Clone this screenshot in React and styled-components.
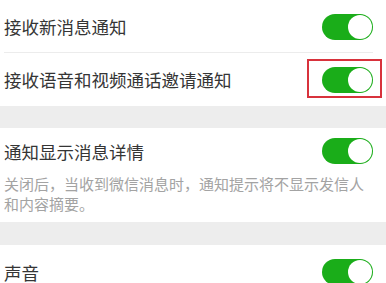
import React from "react";
import styled, { createGlobalStyle } from "styled-components";

const Global = createGlobalStyle`
  html, body {
    margin: 0;
    padding: 0;
    background: #ededed;
    font-family: "Noto Sans CJK SC", "Noto Sans", sans-serif;
  }
`;

const Page = styled.div`
  width: 386px;
  height: 283px;
  overflow: hidden;
  background: #ededed;
`;

const Group = styled.div`
  background: #fff;
  margin-bottom: ${(p) => p.gap || 0}px;
`;

const Row = styled.div`
  position: relative;
  display: flex;
  align-items: center;
  justify-content: space-between;
  height: ${(p) => p.h}px;
  padding: 0 13px 0 4px;
  box-sizing: border-box;
  &::after {
    content: "";
    display: ${(p) => (p.divider ? "block" : "none")};
    position: absolute;
    left: 4px;
    right: 13px;
    bottom: 0;
    height: 1px;
    background: #ececec;
  }
`;

const Title = styled.span`
  font-size: 17.5px;
  line-height: 1.2;
  color: #353535;
`;

const Desc = styled.div`
  padding: 0 13px 8px 4px;
  font-size: 15px;
  line-height: 20px;
  color: #a3a3a3;
`;

const SwitchWrap = styled.div`
  position: relative;
  flex: none;
`;

const Track = styled.div`
  width: 51px;
  height: 26px;
  border-radius: 13px;
  background: #1aad19;
  position: relative;
`;

const Knob = styled.div`
  position: absolute;
  top: 1px;
  right: 1px;
  width: 24px;
  height: 24px;
  border-radius: 50%;
  background: #fff;
`;

const Highlight = styled.div`
  position: absolute;
  top: -8px;
  left: -15px;
  right: -9px;
  bottom: -5px;
  border: 2px solid #d8323c;
`;

function Switch({ marked }) {
  return (
    <SwitchWrap>
      <Track>
        <Knob />
      </Track>
      {marked && <Highlight />}
    </SwitchWrap>
  );
}

export default function App() {
  return (
    <Page>
      <Global />
      <Group gap={22}>
        <Row h={53} divider>
          <Title>接收新消息通知</Title>
          <Switch />
        </Row>
        <Row h={53}>
          <Title>接收语音和视频通话邀请通知</Title>
          <Switch marked />
        </Row>
      </Group>
      <Group gap={23}>
        <Row h={46}>
          <Title>通知显示消息详情</Title>
          <Switch />
        </Row>
        <Desc>关闭后，当收到微信消息时，通知提示将不显示发信人和内容摘要。</Desc>
      </Group>
      <Group>
        <Row h={54}>
          <Title>声音</Title>
          <Switch />
        </Row>
      </Group>
    </Page>
  );
}
